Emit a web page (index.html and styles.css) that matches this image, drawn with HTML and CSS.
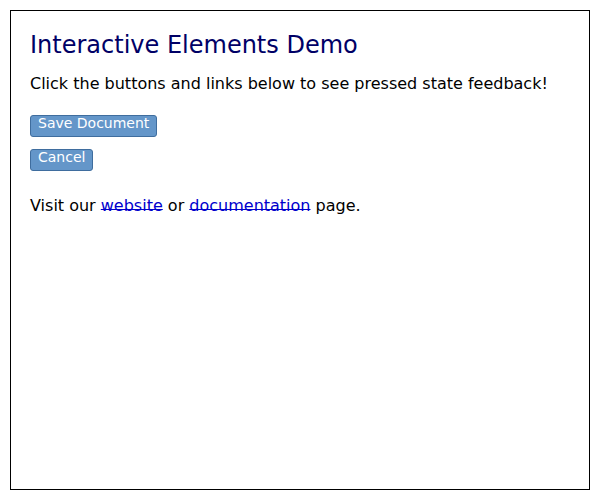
FILE: index.html
```html
<!DOCTYPE html>
<html lang="en">
<head>
<meta charset="utf-8">
<title>Interactive Elements Demo</title>
<link rel="stylesheet" href="styles.css">
</head>
<body>
<div class="panel">
  <h1 class="title">Interactive Elements Demo</h1>
  <p class="intro">Click the buttons and links below to see pressed state feedback!</p>
  <div class="actions">
    <button class="btn" type="button">Save Document</button>
    <button class="btn" type="button">Cancel</button>
  </div>
  <p class="links">Visit our <a href="#" class="link">website</a> or <a href="#" class="link">documentation</a> page.</p>
</div>
</body>
</html>
```
FILE: styles.css
```css
html, body {
  margin: 0;
  padding: 0;
  background: #ffffff;
}
body {
  padding: 10px;
  font-family: "DejaVu Sans", sans-serif;
  color: #000000;
}
.panel {
  box-sizing: border-box;
  width: 580px;
  height: 480px;
  border: 1px solid #000000;
  padding: 20px 19px;
}
.title {
  margin: 0 0 15px;
  font-size: 24px;
  font-weight: normal;
  color: #000066;
  line-height: normal;
}
.intro {
  margin: 0 0 22px;
  font-size: 16px;
  line-height: normal;
}
.actions {
  display: flex;
  flex-direction: column;
  align-items: flex-start;
  gap: 12px;
}
.btn {
  box-sizing: border-box;
  height: 22px;
  margin: 0;
  padding: 0 7px 6px;
  border: 1px solid #3f6d9e;
  border-radius: 3px;
  background: #6496c9;
  color: #ffffff;
  font-family: "DejaVu Sans", sans-serif;
  font-size: 14px;
  line-height: 14px;
  text-align: left;
}
.links {
  margin: 25px 0 0;
  font-size: 16px;
  line-height: normal;
}
.link {
  color: #0000cc;
  text-decoration: underline;
  text-decoration-skip-ink: none;
  text-underline-offset: -2px;
}
```
